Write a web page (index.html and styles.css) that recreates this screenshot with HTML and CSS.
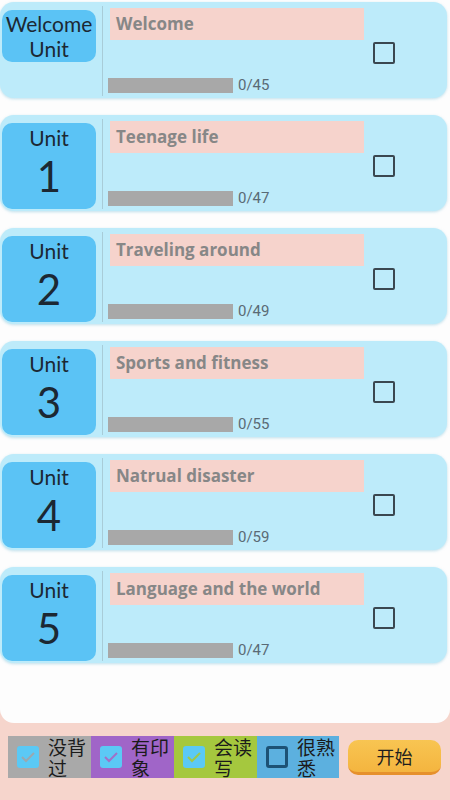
FILE: index.html
```html
<!DOCTYPE html>
<html>
  <head>
    <title>Units</title>
    <link rel="stylesheet" href="styles.css">
  </head>
  <body>
    <div class="list">
      <div class="card">
        <div class="unit unit-welcome"><span>Welcome</span><span>Unit</span></div>
        <div class="divider"></div>
        <div class="info">
          <div class="title">Welcome</div>
          <div class="progress"><div class="bar"></div><span class="count">0/45</span></div>
        </div>
        <div class="check"></div>
      </div>

      <div class="card">
        <div class="unit"><span>Unit</span><span class="num">1</span></div>
        <div class="divider"></div>
        <div class="info">
          <div class="title">Teenage life</div>
          <div class="progress"><div class="bar"></div><span class="count">0/47</span></div>
        </div>
        <div class="check"></div>
      </div>

      <div class="card">
        <div class="unit"><span>Unit</span><span class="num">2</span></div>
        <div class="divider"></div>
        <div class="info">
          <div class="title">Traveling around</div>
          <div class="progress"><div class="bar"></div><span class="count">0/49</span></div>
        </div>
        <div class="check"></div>
      </div>

      <div class="card">
        <div class="unit"><span>Unit</span><span class="num">3</span></div>
        <div class="divider"></div>
        <div class="info">
          <div class="title">Sports and fitness</div>
          <div class="progress"><div class="bar"></div><span class="count">0/55</span></div>
        </div>
        <div class="check"></div>
      </div>

      <div class="card">
        <div class="unit"><span>Unit</span><span class="num">4</span></div>
        <div class="divider"></div>
        <div class="info">
          <div class="title">Natrual disaster</div>
          <div class="progress"><div class="bar"></div><span class="count">0/59</span></div>
        </div>
        <div class="check"></div>
      </div>

      <div class="card">
        <div class="unit"><span>Unit</span><span class="num">5</span></div>
        <div class="divider"></div>
        <div class="info">
          <div class="title">Language and the world</div>
          <div class="progress"><div class="bar"></div><span class="count">0/47</span></div>
        </div>
        <div class="check"></div>
      </div>
    </div>

    <div class="footer">
      <div class="legend">
        <label class="level level-gray">
          <span class="box box-on"><svg viewBox="0 0 22 22"><path d="M5 11l4 4 8-8" /></svg></span>
          <span class="level-text">没背过</span>
        </label>
        <label class="level level-purple">
          <span class="box box-on"><svg viewBox="0 0 22 22"><path d="M5 11l4 4 8-8" /></svg></span>
          <span class="level-text">有印象</span>
        </label>
        <label class="level level-green">
          <span class="box box-on"><svg viewBox="0 0 22 22"><path d="M5 11l4 4 8-8" /></svg></span>
          <span class="level-text">会读写</span>
        </label>
        <label class="level level-blue">
          <span class="box box-off"></span>
          <span class="level-text">很熟悉</span>
        </label>
      </div>
      <a class="start-button">开始</a>
    </div>
  </body>
</html>
```

FILE: styles.css
```css
body {
  margin: 0;
  background-color: #f6d5cc;
  font-family: Roboto, "Noto Sans", "Noto Sans CJK SC", sans-serif;
  width: 450px;
  height: 800px;
  overflow: hidden;
}

.list {
  height: 721px;
  padding-top: 2px;
  background-color: #fdfdfd;
  border-radius: 0 0 14px 14px;
  display: flex;
  flex-direction: column;
  gap: 17px;
}

.card {
  display: flex;
  align-items: stretch;
  height: 96px;
  margin: 0 3px 0 0;
  box-sizing: border-box;
  padding: 8px 0 2px 2px;
  background-color: #bdebfa;
  border-radius: 14px;
  box-shadow: 0 1px 3px rgba(150, 205, 225, 0.6);
}

.unit {
  width: 94px;
  flex-shrink: 0;
  display: flex;
  flex-direction: column;
  align-items: center;
  background-color: #5bc3f5;
  border-radius: 10px;
  color: #1c2833;
  font-family: Lato, "Open Sans", sans-serif;
  font-size: 21px;
  line-height: 26px;
  padding-top: 2px;
  box-sizing: border-box;
}

.unit-welcome {
  height: 52px;
  padding-top: 1px;
  line-height: 25px;
  font-size: 21px;
}

.unit .num {
  font-size: 42px;
  line-height: 51px;
  margin-top: 0;
}

.divider {
  width: 1px;
  margin: -4px 5px 0 6px;
  background-color: #a8ccd8;
}

.info {
  width: 256px;
  display: flex;
  flex-direction: column;
  justify-content: space-between;
}

.title {
  margin: -2px 0 0 2px;
  height: 32px;
  line-height: 32px;
  padding-left: 6px;
  background-color: #f6d3cc;
  color: #878787;
  font-family: "Open Sans", sans-serif;
  font-weight: 700;
  font-size: 17px;
}

.progress {
  display: flex;
  align-items: center;
  gap: 5px;
  margin-bottom: 2px;
}

.bar {
  width: 125px;
  height: 15px;
  background-color: #a8a8a8;
}

.count {
  color: #5a6a75;
  font-size: 15px;
}

.check {
  width: 18px;
  height: 18px;
  border: 2px solid #3a4750;
  border-radius: 2px;
  margin: 32px 0 0 9px;
}

.footer {
  display: flex;
  align-items: center;
  padding: 13px 0 0 8px;
}

.legend {
  display: flex;
  height: 42px;
}

.level {
  width: 83px;
  display: flex;
  align-items: center;
  box-sizing: border-box;
  padding-left: 9px;
  color: #1b1b1b;
  font-family: "Noto Sans CJK SC", sans-serif;
  font-size: 19px;
  line-height: 21px;
}

.level-gray { background-color: #a9a9a9; }
.level-purple { background-color: #a065c8; }
.level-green { background-color: #a5c83e; }
.level-blue { background-color: #5cb0df; width: 82px; }

.box {
  width: 22px;
  height: 22px;
  flex-shrink: 0;
  border-radius: 3px;
  box-sizing: border-box;
}

.box-on {
  background-color: #5bc9f5;
}

.box svg {
  display: block;
  width: 22px;
  height: 22px;
  fill: none;
  stroke-width: 2;
}

.level-gray .box svg { stroke: #9aa8b0; }
.level-purple .box svg { stroke: #a070c8; }
.level-green .box svg { stroke: #a0c84a; }

.box-off {
  border: 3px solid #1d5275;
  border-radius: 3px;
}

.level-text {
  width: 40px;
  margin-left: 9px;
}

.start-button {
  display: block;
  margin-left: 9px;
  width: 93px;
  height: 32px;
  line-height: 32px;
  text-align: center;
  background: linear-gradient(#f8c552, #f4b53f);
  border-bottom: 3px solid #e6902c;
  border-radius: 10px;
  color: #1e1e1e;
  font-family: "Noto Sans CJK SC", sans-serif;
  font-size: 18px;
}
```
